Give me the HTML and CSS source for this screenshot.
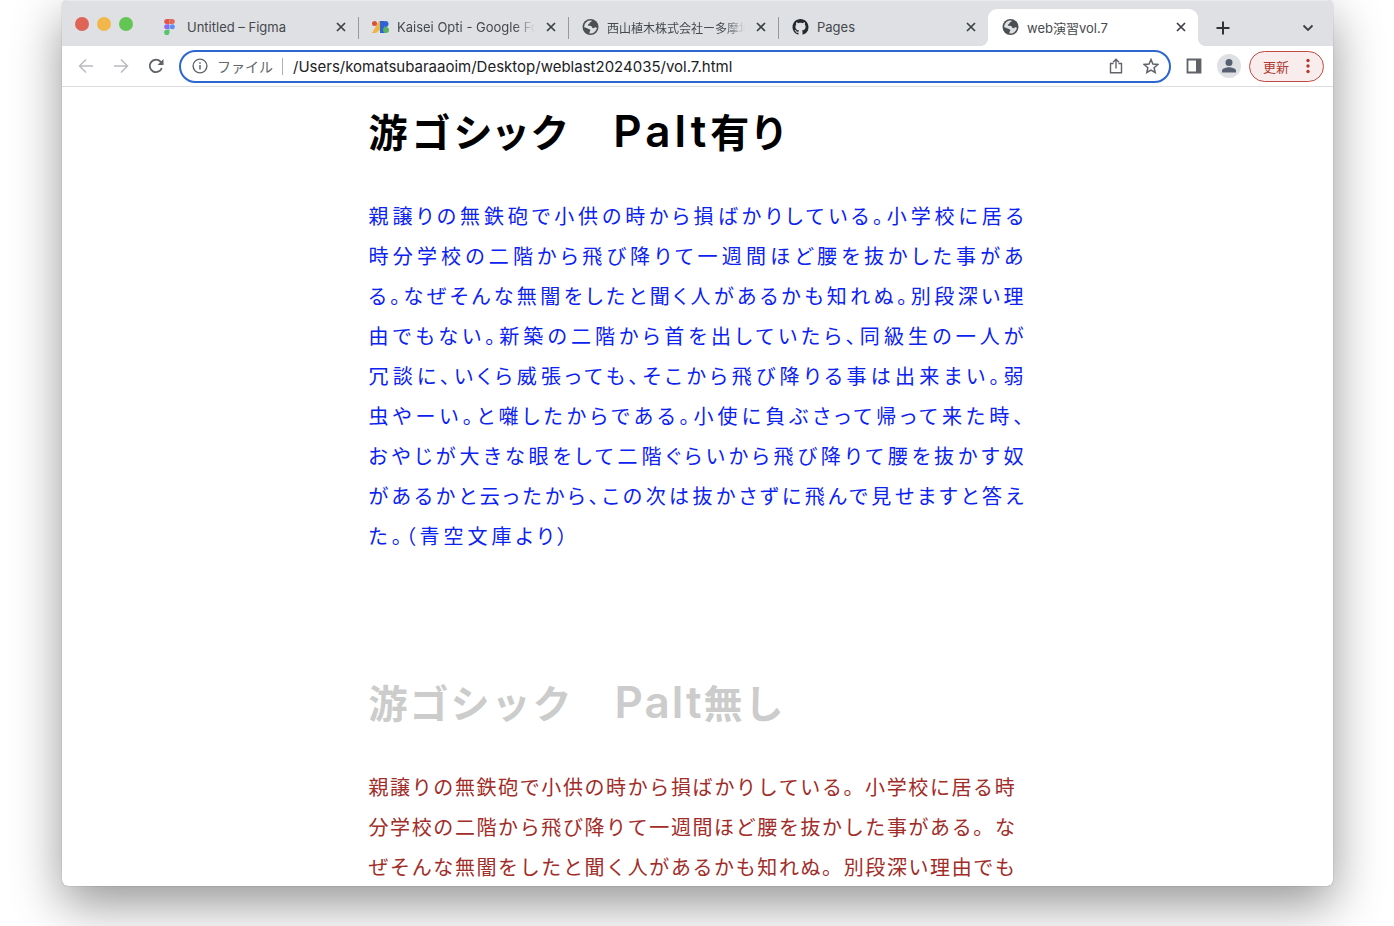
FILE: index.html
```html
<!DOCTYPE html>
<html lang="ja">
<head>
<meta charset="utf-8">
<title>web演習vol.7</title>
<link rel="stylesheet" href="styles.css">
</head>
<body>
<svg class="symbols" aria-hidden="true">
  <symbol id="close" viewBox="0 0 16 16"><path d="M4 4l8 8M12 4l-8 8" fill="none" stroke="#3c4043" stroke-width="1.7"/></symbol>
  <symbol id="globe" viewBox="0 0 16 16"><circle cx="8" cy="8" r="8" fill="#4d5053"/><path d="M9.500 1.800C9 3.200 7.200 3 7 4.300 6.800 5.400 5.300 5 5.300 6.300c0 1 2.400.2 3.500.9 1 .7.7 2 2 2 1 0 1.200-1 2.300-.9.600 0 1 .3 1.300.6A6.500 6.500 0 0 1 7 14.400c.2-1.100-.1-1.500.6-2.300.7-.8-.2-1.900-1.200-2.100C4.600 9.700 3.500 8.400 1.600 8.300A6.400 6.400 0 0 1 9.500 1.800z" fill="#dee0e4"/></symbol>
</svg>
<div class="window">
  <header class="tab-strip">
    <div class="lights"><i class="light red"></i><i class="light yellow"></i><i class="light green"></i></div>
    <div class="tab">
      <svg class="favicon" viewBox="1 0 16 16"><path d="M5.200 0H8v5H5.200a2.500 2.500 0 0 1 0-5z" fill="#e2574c"/><path d="M8 0h2.800a2.500 2.500 0 0 1 0 5H8z" fill="#e2695a"/><path d="M5.200 5.300H8v5H5.200a2.500 2.500 0 0 1 0-5z" fill="#8a6cf0"/><circle cx="10.800" cy="7.800" r="2.500" fill="#5c8ff0"/><path d="M5.200 10.700H8v2.600a2.700 2.700 0 1 1-2.800-2.600z" fill="#58c46c"/></svg>
      <span class="title">Untitled – Figma</span>
      <button class="icon-button" aria-label="タブを閉じる"><svg><use href="#close"/></svg></button>
    </div>
    <div class="tab divided">
      <svg class="favicon" viewBox="0 0 17 16"><path d="M7 2h3v7L4 14H0z" fill="#f0b445"/><circle cx="2.500" cy="4.500" r="2.500" fill="#d9503f"/><path d="M8 2h4v12H8z" fill="#2f63d5"/><circle cx="13.500" cy="5" r="3" fill="#2f63d5"/><path d="M12 8a3 3 0 0 1 0 6z" fill="#2f7d44"/><circle cx="14" cy="11" r="3" fill="#58b25f"/></svg>
      <span class="title fade">Kaisei Opti - Google Fo</span>
      <button class="icon-button" aria-label="タブを閉じる"><svg><use href="#close"/></svg></button>
    </div>
    <div class="tab divided">
      <svg class="favicon"><use href="#globe"/></svg>
      <span class="title fade kanji">西山植木株式会社ー多摩地</span>
      <button class="icon-button" aria-label="タブを閉じる"><svg><use href="#close"/></svg></button>
    </div>
    <div class="tab divided">
      <svg class="favicon" viewBox="0 0 16 16"><path fill="#24292e" d="M8 0C3.580 0 0 3.580 0 8c0 3.540 2.290 6.530 5.470 7.590.4.070.55-.17.55-.38 0-.19-.01-.82-.01-1.490-2.010.37-2.530-.49-2.690-.94-.09-.23-.48-.94-.82-1.130-.28-.15-.68-.52-.01-.53.63-.01 1.080.58 1.230.82.72 1.210 1.870.87 2.330.66.07-.52.28-.87.51-1.070-1.780-.2-3.640-.89-3.640-3.950 0-.87.31-1.590.82-2.150-.08-.2-.36-1.020.08-2.120 0 0 .67-.21 2.200.82.64-.18 1.320-.27 2-.27s1.360.09 2 .27c1.530-1.040 2.200-.82 2.200-.82.44 1.100.16 1.920.08 2.120.51.56.82 1.270.82 2.150 0 3.070-1.870 3.750-3.650 3.950.29.25.54.73.54 1.480 0 1.070-.01 1.930-.01 2.200 0 .21.15.46.55.38A8.010 8.010 0 0 0 16 8c0-4.420-3.580-8-8-8z"/></svg>
      <span class="title">Pages</span>
      <button class="icon-button" aria-label="タブを閉じる"><svg><use href="#close"/></svg></button>
    </div>
    <div class="tab active">
      <svg class="favicon"><use href="#globe"/></svg>
      <span class="title">web演習vol.7</span>
      <button class="icon-button" aria-label="タブを閉じる"><svg><use href="#close"/></svg></button>
    </div>
    <button class="icon-button new-tab" aria-label="新しいタブ"><svg viewBox="0 0 16 16"><path d="M8 1.500v13M1.500 8h13" fill="none" stroke="#303236" stroke-width="2"/></svg></button>
    <button class="icon-button tab-search" aria-label="タブを検索"><svg viewBox="0 0 16 16"><path d="M3.500 5.500L8 10l4.500-4.500" fill="none" stroke="#3c4043" stroke-width="1.800"/></svg></button>
  </header>
  <nav class="toolbar">
    <div class="nav-buttons">
      <button class="icon-button" aria-label="戻る"><svg viewBox="0 0 16 16"><path d="M15 8H2M8 1.500L1.500 8 8 14.500" fill="none" stroke="#b9bbbe" stroke-width="1.500"/></svg></button>
      <button class="icon-button" aria-label="進む"><svg viewBox="0 0 16 16"><path d="M1 8h13M8 1.500L14.500 8 8 14.500" fill="none" stroke="#b9bbbe" stroke-width="1.500"/></svg></button>
      <button class="icon-button" aria-label="再読み込み"><svg viewBox="0 0 16 16"><path d="M13.800 10A6.200 6.200 0 1 1 12.500 3.700L14 5.500" fill="none" stroke="#5f6368" stroke-width="1.800"/><path d="M15.500 1v6h-6z" fill="#5f6368"/></svg></button>
    </div>
    <div class="omnibox">
      <svg class="info" viewBox="0 0 16 16"><circle cx="8" cy="8" r="6.900" fill="none" stroke="#5f6368" stroke-width="1.400"/><path d="M8 7v4.500M8 4.300v1.500" stroke="#5f6368" stroke-width="1.500"/></svg>
      <label class="scheme" for="address">ファイル</label>
      <input class="address" id="address" type="text" value="/Users/komatsubaraaoim/Desktop/weblast2024035/vol.7.html">
      <button class="icon-button" aria-label="共有"><svg viewBox="0 0 16 16"><path d="M5.500 5.500h-3v9.300h11V5.500h-3M8 10.500V1.500M5 4.200l3-3 3 3" fill="none" stroke="#5f6368" stroke-width="1.400"/></svg></button>
      <button class="icon-button" aria-label="ブックマーク"><svg viewBox="0 0 16 16"><path d="M8 1.500l1.900 4.600 4.900.4-3.700 3.200 1.100 4.800L8 12l-4.200 2.500 1.100-4.800L1.200 6.500l4.900-.4z" fill="none" stroke="#5f6368" stroke-width="1.500"/></svg></button>
    </div>
    <button class="icon-button" aria-label="サイドパネル"><svg viewBox="0 0 16 16"><path d="M1.500 1.500h13v13h-13z" fill="none" stroke="#5f6368" stroke-width="1.800"/><path d="M10 1h5v14h-5z" fill="#5f6368"/></svg></button>
    <button class="avatar" aria-label="プロフィール"><svg viewBox="0 0 24 24"><circle cx="12" cy="8.500" r="3.500" fill="#566070"/><path d="M5 18.500v-1.800C5 14.500 9.500 13.300 12 13.300s7 1.200 7 3.400v1.800z" fill="#566070"/></svg></button>
    <button class="update">更新<svg viewBox="0 0 4 16"><circle cx="2" cy="2.500" r="1.700"/><circle cx="2" cy="8" r="1.700"/><circle cx="2" cy="13.500" r="1.700"/></svg></button>
  </nav>
  <main class="page">
    <section class="sample palt">
      <h1>游ゴシック　<span class="latin">Palt</span>有り</h1>
      <p>
        <span class="line">親譲りの無鉄砲で小供の時から損ばかりしている。小学校に居る</span>
        <span class="line">時分学校の二階から飛び降りて一週間ほど腰を抜かした事があ</span>
        <span class="line">る。なぜそんな無闇をしたと聞く人があるかも知れぬ。別段深い理</span>
        <span class="line">由でもない。新築の二階から首を出していたら、同級生の一人が</span>
        <span class="line">冗談に、いくら威張っても、そこから飛び降りる事は出来まい。弱</span>
        <span class="line">虫やーい。と囃したからである。小使に負ぶさって帰って来た時、</span>
        <span class="line">おやじが大きな眼をして二階ぐらいから飛び降りて腰を抜かす奴</span>
        <span class="line">があるかと云ったから、この次は抜かさずに飛んで見せますと答え</span>
        た。（青空文庫より）
      </p>
    </section>
    <section class="sample plain">
      <h1>游ゴシック　<span class="latin">Palt</span>無し</h1>
      <p>親譲りの無鉄砲で小供の時から損ばかりしている。小学校に居る時分学校の二階から飛び降りて一週間ほど腰を抜かした事がある。なぜそんな無闇をしたと聞く人があるかも知れぬ。別段深い理由でも</p>
    </section>
  </main>
</div>
</body>
</html>
```

FILE: styles.css
```css
* { box-sizing: border-box; }

body {
  margin: 0;
  height: 100vh;
  padding: 0 61px 40px 62px;
  overflow: hidden;
  background: #fff;
  font-family: Inter, "Noto Sans CJK JP", sans-serif;
}

button { border: 0; padding: 0; background: none; font: inherit; }
.symbols { display: none; }

.window {
  display: flex;
  flex-direction: column;
  height: 100%;
  overflow: hidden;
  border-radius: 6px;
  background: #fff;
  box-shadow: 0 0 1px rgba(0, 0, 0, .5), 0 18px 50px rgba(0, 0, 0, .42);
}

.tab-strip {
  display: flex;
  flex: none;
  align-items: flex-end;
  height: 46px;
  background: #dee0e4;
  border-top: 1px solid #e9eaed;
}

.lights { display: flex; gap: 8px; width: 86px; padding: 0 0 15px 13px; }
.light { width: 14px; height: 14px; border-radius: 50%; }
.red { background: #de6458; }
.yellow { background: #f1b74a; }
.green { background: #62c554; }

.tab {
  position: relative;
  display: flex;
  align-items: center;
  gap: 8px;
  width: 210px;
  height: 37px;
  padding: 0 9px 1px 14px;
  color: #45484c;
  font-size: 13px;
}
.divided::before {
  content: "";
  position: absolute;
  left: 0;
  top: 8px;
  width: 1px;
  height: 22px;
  background: #95989c;
}
.active { background: #fff; border-radius: 9px 9px 0 0; }
.active::before, .active::after {
  content: "";
  position: absolute;
  bottom: 0;
  width: 8px;
  height: 8px;
}
.active::before { left: -8px; background: radial-gradient(circle at 0 0, #dee0e4 8px, #fff 8px); }
.active::after { right: -8px; background: radial-gradient(circle at 100% 0, #dee0e4 8px, #fff 8px); }

.favicon { flex: none; width: 17px; height: 16px; }
.title { flex: 1; white-space: nowrap; }
.fade { min-width: 0; mask-image: linear-gradient(to right, #000 85%, transparent); }
.kanji { font-size: 12px; }

.icon-button { flex: none; width: 16px; height: 16px; }
.icon-button svg { display: block; width: 16px; height: 16px; }
.new-tab { margin: 0 0 10px 17px; }
.tab-search { margin: 0 17px 10px auto; }

.toolbar {
  display: flex;
  flex: none;
  align-items: center;
  height: 41px;
  padding: 0 9px 0 16px;
  border-bottom: 1px solid #dcdddf;
}
.nav-buttons { display: flex; gap: 19px; margin-right: 15px; }

.omnibox {
  display: flex;
  flex: 1;
  align-items: center;
  height: 33px;
  margin-right: 15px;
  padding: 0 10px 0 11px;
  border: 2px solid #2c66d0;
  border-radius: 17px;
}
.omnibox .icon-button + .icon-button { margin-left: 19px; }
.info { flex: none; width: 16px; height: 16px; margin-right: 9px; }
.scheme {
  padding-right: 9px;
  border-right: 1px solid #aeb1b5;
  color: #62666b;
  font-size: 14px;
  line-height: 17px;
}
.address {
  flex: 1;
  min-width: 0;
  padding: 0 0 0 10px;
  border: 0;
  outline: 0;
  background: none;
  color: #202124;
  font-family: inherit;
  font-size: 15px;
}

.avatar { width: 24px; height: 24px; margin: 0 8px 0 15px; border-radius: 50%; background: #dee0e4; }
.avatar svg { display: block; width: 24px; height: 24px; }
.update {
  display: flex;
  align-items: center;
  justify-content: space-between;
  width: 75px;
  height: 31px;
  padding: 0 13px;
  border: 1px solid #bd4b44;
  border-radius: 16px;
  background: #f8edec;
  color: #b23a33;
  font-size: 13px;
}
.update svg { width: 4px; height: 16px; fill: #b23a33; }

.page { flex: 1; min-height: 0; overflow: hidden; }
.sample {
  max-width: 658px;
  margin: 0 auto;
  padding-top: 13px;
  font-family: "Noto Sans CJK JP", sans-serif;
  font-size: 20px;
}
.sample h1 { margin: 0 0 36px; font-size: 39px; line-height: 60px; }
.sample p { margin: 0; line-height: 40px; }
.latin { font-family: Inter, sans-serif; font-size: 44px; font-weight: 600; line-height: 1; }

.palt { font-feature-settings: "palt"; letter-spacing: 4px; }
.palt p { color: #0c22f2; }
.line { display: block; letter-spacing: 3px; text-align: justify; text-align-last: justify; }
.plain { padding-top: 115px; letter-spacing: 2px; }
.plain h1 { color: #cbcccb; }
.plain p { color: #a12c28; letter-spacing: .08em; }
```
